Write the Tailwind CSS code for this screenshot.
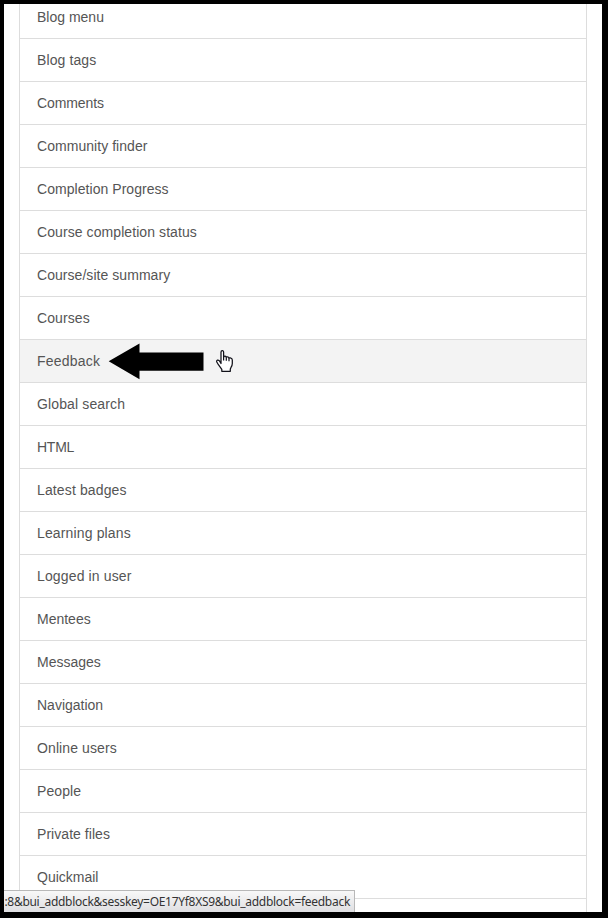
<!DOCTYPE html>
<html lang="en">
<head>
  <meta charset="UTF-8" />
  <title>Add a block</title>
  <meta name="viewport" content="width=device-width, initial-scale=1.0" />
  <script src="https://cdn.jsdelivr.net/npm/@tailwindcss/browser@4"></script>
</head>
<body class="bg-black">
  <div class="relative h-[918px] w-[608px] overflow-hidden border-t-4 border-r-6 border-b-6 border-l-4 border-black bg-white">
    <!-- Block list, scrolled so the first row is cut off -->
    <ul id="blockList" class="-mt-2 mr-[15px] ml-[15px] border-x border-[#dddddd] font-['Liberation_Sans',Arial,sans-serif] text-[14px] text-[#555555]"></ul>

    <!-- Arrow pointing at the hovered row -->
    <svg class="absolute top-[339px] left-[104px]" width="97" height="38" viewBox="0 0 97 38">
      <path d="M0.7 18.3 31.5 0.5V9.5H95.5V27.8H31.5V36.2Z" fill="#000" />
    </svg>

    <!-- Hand cursor -->
    <svg class="absolute top-[346px] left-[212px]" width="17" height="22" viewBox="0 0 17 22">
      <path d="M5 13.5V2.2Q5 .7 6.3 .7T7.6 2.2V7.2Q7.7 6 9 6.1 10.3 6.2 10.3 7.4 10.6 6.6 11.7 6.8 13 7 13 8.3 13.3 7.6 14.3 7.8 16.3 8.2 16.3 10V13.5Q16.3 15.5 15 17.4L14.3 19V21.3H5.8V19.3L2.4 14.7 .8 12Q.3 10.6 1.5 10.1 2.9 9.7 3.8 11.4Z" fill="#fff" stroke="#101018" stroke-width="1.25" stroke-linejoin="round" />
      <path d="M7.6 6.5V10.5M10.3 7.4V10.8M13 8.2V11.2" fill="none" stroke="#101018" stroke-width="1.2" />
    </svg>

    <!-- Browser status bar -->
    <div class="absolute bottom-0 left-0 flex h-[22px] w-[351px] items-center justify-end overflow-hidden border-t border-r border-[#b8b8b8] bg-linear-to-b from-[#f8f8f8] to-[#dfdfe2] pr-1 font-['Noto_Sans','Open_Sans',sans-serif] text-[12px] tracking-[-0.29px] whitespace-nowrap text-[#333333]">
      <span id="statusText">:8&amp;bui_addblock&amp;sesskey=OE17Yf8XS9&amp;bui_addblock=feedback</span>
    </div>
  </div>

  <script>
    // name, letter spacing in px
    const blocks = [
      ["Blog menu", 0], ["Blog tags", 0.1], ["Comments", -0.1], ["Community finder", 0.05],
      ["Completion Progress", 0.05], ["Course completion status", 0.08],
      ["Course/site summary", 0.05], ["Courses", 0.1], ["Feedback", 0.2],
      ["Global search", 0.13], ["HTML", -0.25], ["Latest badges", 0.13],
      ["Learning plans", 0.14], ["Logged in user", 0.14], ["Mentees", 0], ["Messages", 0],
      ["Navigation", 0], ["Online users", 0.1], ["People", 0.1], ["Private files", 0.05],
      ["Quickmail", 0], ["", 0]
    ];
    const hovered = "Feedback";

    document.getElementById("blockList").innerHTML = blocks.map(([name, spacing]) => `
      <li class="h-[43px] border-b border-[#dddddd] pl-[17px] leading-[42px] ${name === hovered ? "bg-[#f3f3f3]" : ""}" style="letter-spacing: ${spacing}px">${name}</li>
    `).join("");
  </script>
</body>
</html>
